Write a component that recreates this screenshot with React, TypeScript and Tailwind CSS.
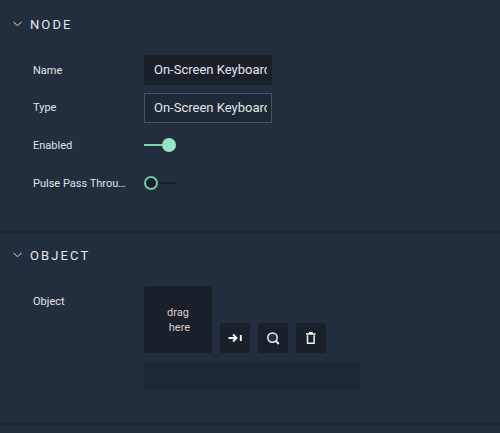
import type { ReactNode } from "react";

function Section({ title, className, children }: { title: string; className: string; children: ReactNode }) {
  return (
    <section className={`border-b-2 border-[#1c2634] ${className}`}>
      <header className="flex h-[18px] items-center pl-[13px]">
        <svg width="9" height="6" viewBox="0 0 9 6" fill="none" stroke="#dce1e6" strokeWidth="1">
          <path d="M0.5 0.8 4.5 4.8 8.5 0.8" />
        </svg>
        <h2 className="pt-px pl-2 text-[13px] leading-[18px] tracking-[2.1px] text-[#e4e7ea]">{title}</h2>
      </header>
      {children}
    </section>
  );
}

function Row({ label, children }: { label: string; children: ReactNode }) {
  return (
    <div className="flex h-[30px] items-center pl-[33px]">
      <span className="w-[111px] shrink-0 pt-px text-[11px] leading-4 text-[#e0e3e7]">{label}</span>
      {children}
    </div>
  );
}

function Field({ value, className }: { value: string; className: string }) {
  return (
    <div className={`h-[30px] w-32 border pr-1 pl-[9px] ${className}`}>
      <div className="overflow-hidden text-[13px] leading-7 whitespace-nowrap text-[#e2e5e9]">{value}</div>
    </div>
  );
}

function Toggle({ on }: { on?: boolean }) {
  return (
    <div className={`flex h-[14px] w-8 items-center ${on ? "mb-px flex-row-reverse" : ""}`}>
      <span className={`size-[14px] rounded-full ${on ? "bg-[#94e6c4]" : "border-2 border-[#73c5a4] bg-[#19202a]"}`} />
      <span className={`h-[2px] grow ${on ? "bg-[#80d3b0]" : "bg-[#19202a]"}`} />
    </div>
  );
}

function IconButton({ label, children }: { label: string; children: ReactNode }) {
  return (
    <button aria-label={label} className="flex size-[30px] items-center justify-center rounded-[2px] bg-[#19202a]">
      <svg width="16" height="16" viewBox="0 0 16 16" fill="none" stroke="#f3f5f6" strokeWidth="1.5">
        {children}
      </svg>
    </button>
  );
}

export default function App() {
  return (
    <main className="h-[433px] w-[500px] overflow-hidden bg-[#222d3d] font-['Roboto',sans-serif]">
      <Section title="NODE" className="h-[233px] pt-[15px]">
        <div className="flex flex-col gap-[7.75px] pt-[22px]">
          <Row label="Name">
            <Field value="On-Screen Keyboard" className="border-[#19202a] bg-[#19202a]" />
          </Row>
          <Row label="Type">
            <Field value="On-Screen Keyboard" className="border-[#46515f] bg-[#1e2937]" />
          </Row>
          <Row label="Enabled">
            <Toggle on />
          </Row>
          <Row label="Pulse Pass Throu…">
            <Toggle />
          </Row>
        </div>
      </Section>
      <Section title="OBJECT" className="h-[192px] pt-[13px]">
        <div className="flex pt-[22px] pl-[33px]">
          <span className="w-[111px] pt-2 text-[11px] leading-4 text-[#e0e3e7]">Object</span>
          <div>
            <div className="flex items-end gap-2">
              <div className="flex h-[67px] w-[68px] flex-col items-center justify-center rounded-[2px] bg-[#19202a] text-[11px] leading-[15px] text-[#dccfc9]">
                <span>drag</span>
                <span className="pl-[3px]">here</span>
              </div>
              <IconButton label="Go to object">
                <path d="M1.5 8h8.2M6 4.5 9.5 8 6 11.5" strokeWidth="1.9" />
                <path d="M13.8 5v6" strokeWidth="1.9" />
              </IconButton>
              <IconButton label="Find object">
                <circle cx="7.5" cy="7.6" r="4.7" fill="#1d3547" />
                <path d="m11 11.2 2.8 2.8" strokeWidth="1.9" />
              </IconButton>
              <IconButton label="Delete object">
                <path d="M4.5 5.2v8h6.6v-8" />
                <path d="M3 3.9h9.6M5.8 2.8h4" />
              </IconButton>
            </div>
            <div className="mt-2 h-[30px] w-[216px] bg-[#1e2735]" />
          </div>
        </div>
      </Section>
    </main>
  );
}
